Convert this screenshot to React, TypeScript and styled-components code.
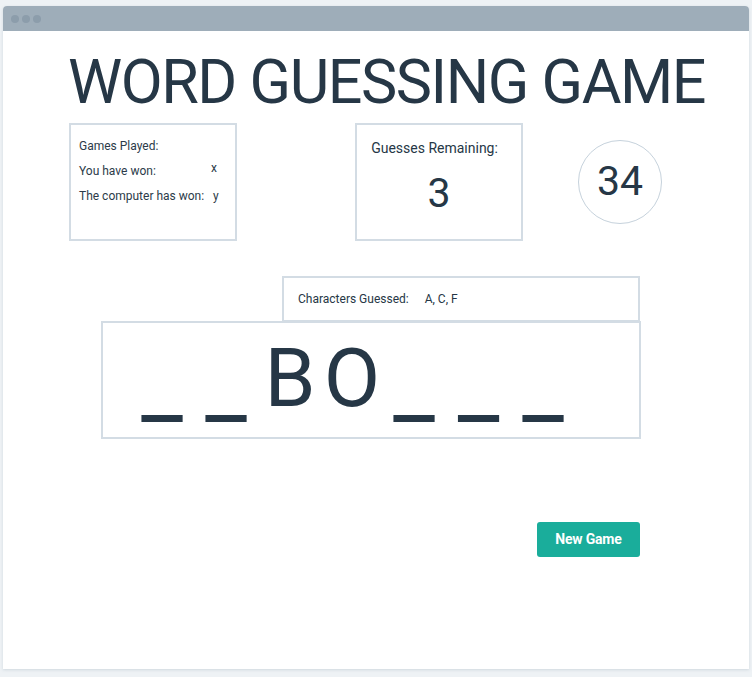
import React from "react";
import styled, { createGlobalStyle } from "styled-components";

const Global = createGlobalStyle`
  html, body { margin: 0; padding: 0; background: #eef2f5; }
  body { font-family: Roboto, "Liberation Sans", sans-serif; color: #263746; }
  * { box-sizing: border-box; }
`;

const Page = styled.div`
  width: 752px;
  height: 677px;
  padding: 6px 3px 8px 3px;
`;

const Window = styled.div`
  height: 663px;
  background: #ffffff;
  border-radius: 4px 4px 0 0;
  box-shadow: 0 1px 3px rgba(120, 140, 160, 0.25);
  display: flex;
  flex-direction: column;
  overflow: hidden;
`;

const TitleBar = styled.div`
  height: 25px;
  flex: none;
  background: #9eadb9;
  display: flex;
  align-items: center;
  gap: 3px;
  padding-left: 8px;
`;

const Dot = styled.span`
  width: 8px;
  height: 8px;
  border-radius: 50%;
  background: #8c9dab;
`;

const Content = styled.div`
  width: 571px;
  margin-left: 66px;
  display: flex;
  flex-direction: column;
`;

const Title = styled.h1`
  margin: 15px 0 0 -1px;
  font-weight: 400;
  font-size: 61px;
  line-height: 72px;
  letter-spacing: -1.45px;
  white-space: nowrap;
  color: #263746;
`;

const StatsRow = styled.div`
  margin-top: 5px;
  display: flex;
  align-items: center;
`;

const Box = styled.div<{ $w: number; $h: number; $ml?: number }>`
  width: ${(p) => p.$w}px;
  height: ${(p) => p.$h}px;
  margin-left: ${(p) => p.$ml ?? 0}px;
  border: 2px solid #d3dce4;
  flex: none;
`;

const StatsBox = styled(Box)`
  padding: 14px 0 0 8px;
  display: grid;
  grid-template-columns: 132px auto;
  grid-auto-rows: 25px;
  align-content: start;
  font-size: 12px;
  line-height: 14px;
`;

const Label = styled.span`
  color: #2c3b49;
`;

const Value = styled.span<{ $dx: number; $dy: number }>`
  color: #2c3b49;
  padding-left: ${(p) => p.$dx}px;
  position: relative;
  top: ${(p) => p.$dy}px;
`;

const GuessBox = styled(Box)`
  display: flex;
  flex-direction: column;
  align-items: center;
  padding-top: 14px;
`;

const GuessLabel = styled.div`
  font-size: 14px;
  line-height: 18px;
  margin-right: 9px;
`;

const BigNumber = styled.div`
  font-size: 41px;
  line-height: 48px;
  margin-top: 12px;
`;

const Circle = styled.div`
  width: 84px;
  height: 84px;
  margin-left: 55px;
  flex: none;
  border: 1px solid #c6d2dc;
  border-radius: 50%;
  display: flex;
  align-items: center;
  justify-content: center;
  font-size: 41px;
  padding-bottom: 2px;
`;

const GuessedBox = styled(Box)`
  margin-top: 35px;
  display: flex;
  align-items: center;
  padding-left: 14px;
  padding-bottom: 1px;
  font-size: 12px;
  gap: 16px;
`;

const WordBox = styled(Box)`
  margin-top: -1px;
  display: flex;
  align-items: flex-start;
  padding: 7px 0 0 27px;
`;

const Cell = styled.span<{ $blank: boolean; $w: number }>`
  width: ${(p) => p.$w}px;
  flex: none;
  text-align: center;
  font-size: ${(p) => (p.$blank ? 92 : 82)}px;
  line-height: 96px;
  position: relative;
  top: ${(p) => (p.$blank ? 6 : 0)}px;
`;

const ButtonRow = styled.div`
  margin-top: 83px;
  display: flex;
  justify-content: flex-end;
`;

const Button = styled.button`
  width: 103px;
  height: 35px;
  border: none;
  border-radius: 3px;
  background: #1aad9b;
  color: #ffffff;
  font-family: Roboto, "Liberation Sans", sans-serif;
  font-weight: 700;
  font-size: 14px;
  letter-spacing: -0.2px;
  padding: 0 0 2px 0;
  cursor: pointer;
`;

const word: { c: string; w: number }[] = [
  { c: "_", w: 64 },
  { c: "_", w: 64 },
  { c: "B", w: 64 },
  { c: "O", w: 60 },
  { c: "_", w: 64 },
  { c: "_", w: 65 },
  { c: "_", w: 64 },
];

export default function App() {
  return (
    <Page>
      <Global />
      <Window>
        <TitleBar>
          <Dot />
          <Dot />
          <Dot />
        </TitleBar>
        <Content>
          <Title>WORD GUESSING GAME</Title>
          <StatsRow>
            <StatsBox $w={168} $h={118}>
              <Label>Games Played:</Label>
              <span />
              <Label>You have won:</Label>
              <Value $dx={0} $dy={-3}>x</Value>
              <Label>The computer has won:</Label>
              <Value $dx={2} $dy={0}>y</Value>
            </StatsBox>
            <GuessBox $w={168} $h={118} $ml={118}>
              <GuessLabel>Guesses Remaining:</GuessLabel>
              <BigNumber>3</BigNumber>
            </GuessBox>
            <Circle>34</Circle>
          </StatsRow>
          <GuessedBox $w={358} $h={46} $ml={213}>
            <span>Characters Guessed:</span>
            <span>A, C, F</span>
          </GuessedBox>
          <WordBox $w={540} $h={118} $ml={32}>
            {word.map((item, i) => (
              <Cell key={i} $blank={item.c === "_"} $w={item.w}>
                {item.c}
              </Cell>
            ))}
          </WordBox>
          <ButtonRow>
            <Button>New Game</Button>
          </ButtonRow>
        </Content>
      </Window>
    </Page>
  );
}
